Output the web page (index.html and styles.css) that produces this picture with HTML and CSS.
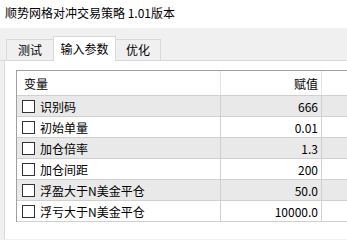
FILE: index.html
```html
<!DOCTYPE html>
<html lang="zh-CN">
<head>
  <meta charset="UTF-8">
  <title>顺势网格对冲交易策略 1.01版本</title>
  <link rel="stylesheet" href="styles.css">
</head>
<body>

  <div class="titlebar">顺势网格对冲交易策略 1.01版本</div>

  <div class="tabs">
    <div class="tab tab-test">测试</div>
    <div class="tab tab-active">输入参数</div>
    <div class="tab tab-opt">优化</div>
  </div>

  <div class="panel">
    <div class="list">
      <div class="row head">
        <div class="cell name">变量</div>
        <div class="cell value">赋值</div>
        <div class="cell rest"></div>
      </div>
      <div class="row odd">
        <div class="cell name"><span class="check"></span>识别码</div>
        <div class="cell value">666</div>
        <div class="cell rest"></div>
      </div>
      <div class="row">
        <div class="cell name"><span class="check"></span>初始单量</div>
        <div class="cell value">0.01</div>
        <div class="cell rest"></div>
      </div>
      <div class="row odd">
        <div class="cell name"><span class="check"></span>加仓倍率</div>
        <div class="cell value">1.3</div>
        <div class="cell rest"></div>
      </div>
      <div class="row">
        <div class="cell name"><span class="check"></span>加仓间距</div>
        <div class="cell value">200</div>
        <div class="cell rest"></div>
      </div>
      <div class="row odd">
        <div class="cell name"><span class="check"></span>浮盈大于N美金平仓</div>
        <div class="cell value">50.0</div>
        <div class="cell rest"></div>
      </div>
      <div class="row">
        <div class="cell name"><span class="check"></span>浮亏大于N美金平仓</div>
        <div class="cell value">10000.0</div>
        <div class="cell rest"></div>
      </div>
    </div>
  </div>

</body>
</html>
```

FILE: styles.css
```css
body {
  margin: 0;
  width: 347px;
  height: 240px;
  overflow: hidden;
  background-color: #f0f0f0;
  font-family: "Noto Sans CJK SC", "Liberation Sans", sans-serif;
  font-size: 12px;
  color: #000;
}
.titlebar {
  height: 28px;
  line-height: 26px;
  padding-left: 5px;
  background-color: #fff;
  white-space: nowrap;
}
.tabs {
  display: flex;
  align-items: flex-end;
  height: 32px;
  padding-left: 6px;
  border-bottom: 1px solid #d9d9d9;
}
.tab {
  box-sizing: border-box;
  height: 21px;
  line-height: 20px;
  text-align: center;
  border: 1px solid #d9d9d9;
  border-bottom: none;
  background-color: #f0f0f0;
}
.tab-test {
  width: 47px;
  border-right: none;
}
.tab-active {
  width: 63px;
  height: 25px;
  line-height: 23px;
  margin-bottom: -1px;
  background-color: #fff;
}
.tab-opt {
  width: 45px;
  border-left: none;
}
.panel {
  box-sizing: border-box;
  margin-left: 4px;
  height: 178px;
  padding: 9px 0 0 11px;
  border-left: 1px solid #d9d9d9;
  background-color: #fff;
}
.list {
  border-top: 1px solid #a0a0a0;
  border-left: 1px solid #a0a0a0;
}
.row {
  display: grid;
  grid-template-columns: 204px 101px 1fr;
  height: 21px;
  box-sizing: border-box;
  border-bottom: 1px solid #d0d0d0;
}
.row.head {
  height: 25px;
}
.row.odd {
  background-color: #e9e9e9;
}
.cell {
  display: flex;
  align-items: center;
  border-right: 1px solid #d0d0d0;
  white-space: nowrap;
}
.head .cell {
  border-right-color: #e3e3e3;
}
.head .name {
  padding-left: 7px;
}
.name {
  padding-left: 5px;
}
.value {
  justify-content: flex-end;
  padding-right: 3px;
}
.rest {
  border-right: none;
}
.check {
  box-sizing: border-box;
  width: 13px;
  height: 13px;
  margin-right: 5px;
  border: 1px solid #333;
  background-color: #fff;
}
```
